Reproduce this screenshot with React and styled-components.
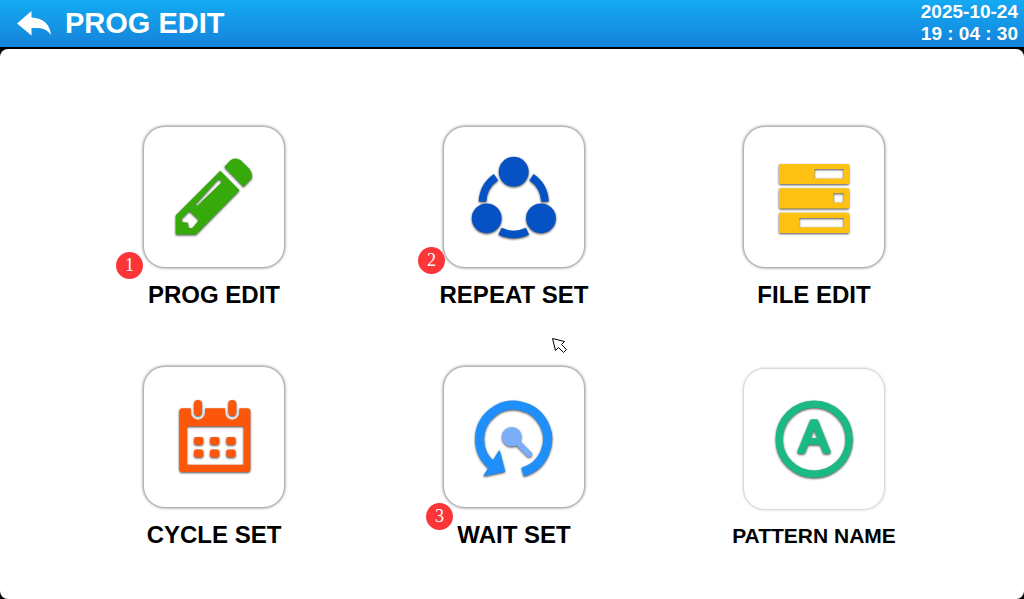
import React from 'react';
import styled, { createGlobalStyle } from 'styled-components';

const GlobalStyle = createGlobalStyle`
    * {
        box-sizing: border-box;
    }

    body {
        margin: 0;
        background: #000;
        font-family: 'Liberation Sans', Arial, sans-serif;
    }
`;

const Screen = styled.div`
    display: flex;
    flex-direction: column;
    min-height: 100vh;
`;

const Header = styled.header`
    display: flex;
    align-items: center;
    justify-content: space-between;
    height: 47px;
    padding: 0 6px 2px 16px;
    background: linear-gradient(#14aaf2, #1583db);
    color: #fff;
`;

const TitleGroup = styled.div`
    display: flex;
    align-items: center;
    gap: 11px;
`;

const BackButton = styled.button`
    display: flex;
    padding: 0;
    border: 0;
    background: none;
    color: inherit;
    cursor: pointer;
`;

const Title = styled.h1`
    margin: 0;
    font-size: 29px;
    font-weight: 700;
    line-height: 44px;
`;

const Clock = styled.time`
    display: flex;
    flex-direction: column;
    font-size: 19px;
    font-weight: 700;
    line-height: 22px;
    text-align: right;
`;

const Panel = styled.main`
    position: relative;
    flex: 1;
    margin-top: 2px;
    padding: 77px 60px 48px 64px;
    border-radius: 8px;
    background: #fff;
`;

const Menu = styled.nav`
    display: grid;
    grid-template-columns: repeat(3, 1fr);
    align-items: end;
    justify-items: center;
    row-gap: 57px;
`;

const MenuButton = styled.button`
    display: flex;
    flex-direction: column;
    align-items: center;
    gap: 13px;
    padding: 0;
    border: 0;
    background: none;
    color: #000;
    font-family: inherit;
    font-size: ${(props) => (props.$compact ? 21 : 24)}px;
    font-weight: 700;
    line-height: ${(props) => (props.$compact ? 26 : 28)}px;
    white-space: nowrap;
    cursor: pointer;
`;

const Tile = styled.span`
    position: relative;
    width: 142px;
    height: 142px;
    border: 1px solid ${(props) => (props.$soft ? '#dadada' : '#b4b4b4')};
    border-radius: 22px;
    background: #fff;
    box-shadow: 0 0 3px
        ${(props) => (props.$soft ? 'rgba(0, 0, 0, 0.2)' : 'rgba(0, 0, 0, 0.5)')};
`;

const TileIcon = styled.svg`
    display: block;
    width: 140px;
    height: 140px;
    filter: drop-shadow(0 1px 1px rgba(0, 0, 0, 0.7));
`;

const Badge = styled.span`
    position: absolute;
    left: ${(props) => props.$left}px;
    top: ${(props) => props.$top}px;
    width: 27px;
    height: 27px;
    border-radius: 50%;
    background: #fb3538;
    color: #fff;
    font-family: 'Liberation Serif', serif;
    font-size: 18px;
    font-weight: 400;
    line-height: 27px;
    text-align: center;
`;

const Pointer = styled.svg`
    position: absolute;
    left: calc(50% + 39px);
    top: 288px;
    pointer-events: none;
`;

const BackIcon = () => (
    <svg width="38" height="28" viewBox="0 0 38 28" aria-hidden="true">
        <path
            d="M1 14.500L15.500 2v6.500c12 .5 18.500 7 19.500 17.500C31 20 26 18.500 15.500 19V26.500z"
            fill="#fff"
        />
    </svg>
);

const PencilIcon = () => (
    <TileIcon viewBox="0 0 140 140" aria-hidden="true">
        <path
            fill="#36a90b"
            fillRule="evenodd"
            d="M32 88L76.300 43.800L95.500 63.300L52 107.500H32.500Q31.700 107.500 31.700 106.500V89ZM45.300 84L37.700 91.700L38.300 95L44 95.700L44.700 101H48.300L54.300 94V92.500ZM51.500 77.500L53 79L76.500 56.500Q78 54 76 52.500H74Z"
        />
        <path
            fill="#36a90b"
            d="M80.300 40L86 33.800Q91 29.500 97 33.500L105.500 42Q109 46.500 107.500 51.500L99.500 59.700Z"
        />
    </TileIcon>
);

const RepeatIcon = () => (
    <TileIcon viewBox="0 0 140 140" aria-hidden="true">
        <g fill="#0652c5">
            <circle cx="69.700" cy="44.700" r="14.900" />
            <circle cx="42.700" cy="91.300" r="14.900" />
            <circle cx="97" cy="91.300" r="14.900" />
        </g>
        <path
            d="M38.500 74.700A31.300 31.300 0 0 1 52 50.200M87.500 50.200A31.300 31.300 0 0 1 101 74.700M56 104.100A31.300 31.300 0 0 0 83.500 104.100"
            fill="none"
            stroke="#0652c5"
            strokeWidth="7.500"
        />
    </TileIcon>
);

const FileIcon = () => (
    <TileIcon viewBox="0 0 140 140" aria-hidden="true">
        <path
            fill="#fdc113"
            fillRule="evenodd"
            d="M36 37H104Q105 37 105 38V56Q105 57 104 57H36Q35 57 35 56V38Q35 37 36 37ZM70.500 42V51.500H99.500V42ZM36 61.300H104Q105 61.300 105 62.300V80.500Q105 81.500 104 81.500H36Q35 81.500 35 80.500V62.300Q35 61.300 36 61.300ZM89.500 66.300V75.500H99.500V66.300ZM36 85.700H104Q105 85.700 105 86.700V105Q105 106 104 106H36Q35 106 35 105V86.700Q35 85.700 36 85.700ZM55.300 91V100.300H99.500V91Z"
        />
    </TileIcon>
);

const CalendarIcon = () => (
    <TileIcon viewBox="0 0 140 140" aria-hidden="true">
        <path
            fill="#fb560a"
            fillRule="evenodd"
            d="M38.300 41.300H46.800V45.500A7.200 7.200 0 0 0 61.200 45.500V41.300H81V45.500A7.200 7.200 0 0 0 95.400 45.500V41.300H103.300Q106.300 41.300 106.300 44.300V102Q106.300 105 103.300 105H38.300Q35.300 105 35.300 102V44.300Q35.300 41.300 38.300 41.300ZM43 59.300V97.700H99.700V59.300Z"
        />
        <g fill="#fb560a">
            <rect x="50" y="33" width="8" height="16" rx="4" />
            <rect x="84.300" y="33" width="8" height="16" rx="4" />
            {[70, 82.5].map((y) =>
                [50, 66, 82.3].map((x) => (
                    <rect
                        key={`${x}-${y}`}
                        x={x}
                        y={y}
                        width="9.300"
                        height="7.800"
                        rx="2"
                    />
                ))
            )}
        </g>
    </TileIcon>
);

const WaitIcon = () => (
    <TileIcon viewBox="0 0 140 140" aria-hidden="true">
        <path
            d="M47.500 98A34 34 0 1 1 78.500 105"
            fill="none"
            stroke="#1e8ffb"
            strokeWidth="9"
        />
        <path
            d="M40 108.700L55.300 83.700L60.700 104.300Z"
            fill="#1e8ffb"
            stroke="#1e8ffb"
            strokeLinejoin="round"
        />
        <circle cx="67.700" cy="69.700" r="9.800" fill="#7aaefb" />
        <path
            d="M70 72L85 87"
            stroke="#7aaefb"
            strokeWidth="6"
            strokeLinecap="round"
        />
    </TileIcon>
);

const PatternIcon = () => (
    <TileIcon viewBox="0 0 140 140" aria-hidden="true">
        <circle
            cx="70.200"
            cy="70.200"
            r="35"
            fill="none"
            stroke="#1bb984"
            strokeWidth="7.300"
        />
        <text
            x="70"
            y="83"
            fill="#1bb984"
            stroke="#1bb984"
            strokeWidth="3.500"
            strokeLinejoin="round"
            textAnchor="middle"
            fontFamily="Liberation Sans, Arial, sans-serif"
            fontSize="45"
            fontWeight="400"
        >
            A
        </text>
    </TileIcon>
);

const items = [
    {
        label: 'PROG EDIT',
        icon: PencilIcon,
        badge: { text: '1', left: -28, top: 125 }
    },
    {
        label: 'REPEAT SET',
        icon: RepeatIcon,
        badge: { text: '2', left: -26, top: 120 }
    },
    { label: 'FILE EDIT', icon: FileIcon },
    { label: 'CYCLE SET', icon: CalendarIcon },
    {
        label: 'WAIT SET',
        icon: WaitIcon,
        badge: { text: '3', left: -18, top: 136 }
    },
    { label: 'PATTERN NAME', icon: PatternIcon, compact: true }
];

const MenuItem = ({ label, icon: Icon, badge, compact }) => (
    <MenuButton type="button" $compact={compact}>
        <Tile $soft={compact}>
            <Icon />
            {badge && (
                <Badge $left={badge.left} $top={badge.top}>
                    {badge.text}
                </Badge>
            )}
        </Tile>
        <span>{label}</span>
    </MenuButton>
);

const App = () => (
    <>
        <GlobalStyle />
        <Screen>
            <Header>
                <TitleGroup>
                    <BackButton type="button" aria-label="Back">
                        <BackIcon />
                    </BackButton>
                    <Title>PROG EDIT</Title>
                </TitleGroup>
                <Clock dateTime="2025-10-24T19:04:30">
                    <span>2025-10-24</span>
                    <span>19 : 04 : 30</span>
                </Clock>
            </Header>
            <Panel>
                <Menu>
                    {items.map((item) => (
                        <MenuItem key={item.label} {...item} />
                    ))}
                </Menu>
                <Pointer
                    width="18"
                    height="18"
                    viewBox="-1 -1 18 18"
                    aria-hidden="true"
                >
                    <path
                        d="M.5.5L12.500 3.500L9.500 6.500L14.500 11.500L11.500 14.500L6.500 9.500L3.500 12.500Z"
                        fill="#fff"
                        stroke="#000"
                    />
                </Pointer>
            </Panel>
        </Screen>
    </>
);

export default App;
